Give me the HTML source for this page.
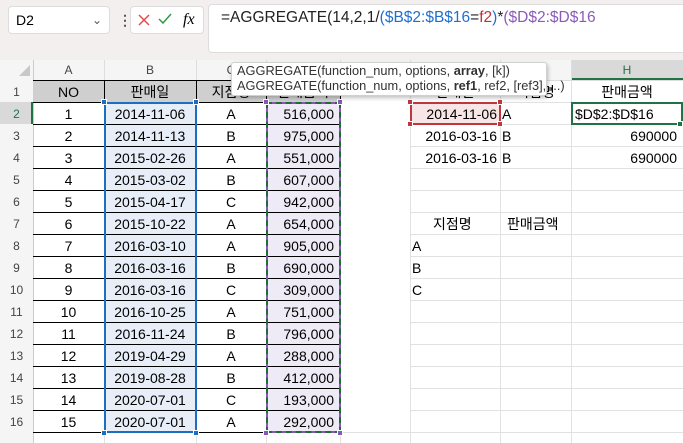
<!DOCTYPE html>
<html><head><meta charset="utf-8"><style>
*{margin:0;padding:0;box-sizing:border-box}
body{width:683px;height:443px;overflow:hidden;background:#fff;position:relative;font-family:"Liberation Sans","Noto Sans CJK KR",sans-serif;color:#000}
div{position:absolute}
.h{height:1px}
.v{width:1px}
.t{font-size:14px;height:22px;line-height:22px;white-space:nowrap}
.c{text-align:center}
.r{text-align:right}
.rh{left:0;width:33px;text-align:center;font-size:12px;color:#444;height:22px;line-height:22px}
.ch{top:60px;height:20px;line-height:20px;text-align:center;font-size:12px;color:#444}
.sq{width:6px;height:6px}
</style></head><body>
<div style="left:0;top:0;width:683px;height:60px;background:#f3efef"></div>
<div style="left:8px;top:6px;width:102px;height:28px;background:#fff;border:1px solid #ddd;border-radius:4px"></div>
<div style="left:16px;top:6px;height:28px;line-height:28px;font-size:14px">D2</div>
<div style="left:92px;top:8px;font-size:12px;color:#555;line-height:24px">&#8964;</div>
<div style="left:118px;top:8px;font-size:14px;color:#555;line-height:24px;font-weight:bold">&#8942;</div>
<div style="left:130px;top:6px;width:74px;height:28px;background:#fff;border:1px solid #ddd;border-radius:4px"></div>
<svg style="position:absolute;left:137px;top:13px" width="14" height="14"><path d="M2 2L12 12M12 2L2 12" stroke="#e04a4a" stroke-width="1.5"/></svg>
<svg style="position:absolute;left:157px;top:12px" width="16" height="14"><path d="M2 7L6 11L14 2" stroke="#2e9a4a" stroke-width="1.5" fill="none"/></svg>
<div style="left:183px;top:6px;height:28px;line-height:28px;font-family:'Liberation Serif',serif;font-style:italic;font-size:16px">fx</div>
<div style="left:208px;top:4px;width:480px;height:49px;background:#fff;border:1px solid #ddd;border-radius:4px"></div>
<div style="left:221px;top:7px;font-size:15.5px;line-height:22px;white-space:nowrap;color:#222">=AGGREGATE(14,2,1/<span style="color:#1f6fd0">(</span><span style="color:#1f6fd0">$B$2:$B$16</span>=<span style="color:#c0303a">f2</span><span style="color:#1f6fd0">)</span>*<span style="color:#8c5bb8">($D$2:$D$16</span></div>

<div style="left:0;top:60px;width:683px;height:20px;background:#f5f5f5"></div>
<div style="left:571px;top:60px;width:112px;height:20px;background:#d9d9d9"></div>
<div style="left:571px;top:78px;width:112px;height:2px;background:#217346"></div>
<svg style="position:absolute;left:18px;top:64px" width="13" height="13"><path d="M12 1L12 12L1 12Z" fill="#c8c8c8"/></svg>
<div class="ch" style="left:33px;width:71px">A</div>
<div class="ch" style="left:104px;width:92px">B</div>
<div class="ch" style="left:196px;width:70px">C</div>
<div class="ch" style="left:571px;width:112px;color:#217346">H</div>
<div class="v" style="left:104px;top:60px;height:20px;background:#ddd"></div>
<div class="v" style="left:196px;top:60px;height:20px;background:#ddd"></div>
<div class="v" style="left:266px;top:60px;height:20px;background:#ddd"></div>
<div class="v" style="left:340px;top:60px;height:20px;background:#ddd"></div>
<div class="v" style="left:410px;top:60px;height:20px;background:#ddd"></div>
<div class="v" style="left:500px;top:60px;height:20px;background:#ddd"></div>
<div class="v" style="left:571px;top:60px;height:20px;background:#ddd"></div>
<div class="h" style="left:0;top:80px;width:683px;background:#ddd"></div>

<div style="left:0;top:80px;width:33px;height:363px;background:#f5f5f5"></div>
<div style="left:0;top:102px;width:33px;height:22px;background:#d9d9d9"></div>
<div style="left:31px;top:102px;width:2px;height:22px;background:#217346"></div>
<div class="v" style="left:33px;top:60px;height:383px;background:#ccc"></div>

<div style="left:33px;top:80px;width:307px;height:22px;background:#cfcfcf"></div>
<div style="left:104px;top:102px;width:92px;height:330px;background:#e7eef8"></div>
<div style="left:266px;top:102px;width:74px;height:330px;background:#efebf6"></div>
<div style="left:410px;top:102px;width:90px;height:22px;background:#f8e6e6"></div>

<div class="v" style="left:410px;top:80px;height:363px;background:#e1e1e1"></div>
<div class="v" style="left:500px;top:80px;height:363px;background:#e1e1e1"></div>
<div class="v" style="left:571px;top:80px;height:363px;background:#e1e1e1"></div>
<div class="h" style="left:410px;top:102px;width:273px;background:#e1e1e1"></div>
<div class="h" style="left:410px;top:124px;width:273px;background:#e1e1e1"></div>
<div class="h" style="left:410px;top:146px;width:273px;background:#e1e1e1"></div>
<div class="h" style="left:410px;top:168px;width:273px;background:#e1e1e1"></div>
<div class="h" style="left:410px;top:190px;width:273px;background:#e1e1e1"></div>
<div class="h" style="left:410px;top:212px;width:273px;background:#e1e1e1"></div>
<div class="h" style="left:410px;top:234px;width:273px;background:#e1e1e1"></div>
<div class="h" style="left:410px;top:256px;width:273px;background:#e1e1e1"></div>
<div class="h" style="left:410px;top:278px;width:273px;background:#e1e1e1"></div>
<div class="h" style="left:410px;top:300px;width:273px;background:#e1e1e1"></div>
<div class="h" style="left:410px;top:322px;width:273px;background:#e1e1e1"></div>
<div class="h" style="left:410px;top:344px;width:273px;background:#e1e1e1"></div>
<div class="h" style="left:410px;top:366px;width:273px;background:#e1e1e1"></div>
<div class="h" style="left:410px;top:388px;width:273px;background:#e1e1e1"></div>
<div class="h" style="left:410px;top:410px;width:273px;background:#e1e1e1"></div>
<div class="h" style="left:410px;top:432px;width:273px;background:#e1e1e1"></div>
<div class="h" style="left:33px;top:432px;width:377px;background:#e1e1e1"></div>
<div class="v" style="left:104px;top:432px;height:11px;background:#e1e1e1"></div>
<div class="v" style="left:196px;top:432px;height:11px;background:#e1e1e1"></div>
<div class="v" style="left:266px;top:432px;height:11px;background:#e1e1e1"></div>
<div class="v" style="left:340px;top:432px;height:11px;background:#e1e1e1"></div>

<div class="h" style="left:33px;top:80px;width:307px;background:#000"></div>
<div class="h" style="left:33px;top:102px;width:307px;background:#000"></div>
<div class="h" style="left:33px;top:124px;width:307px;background:#000"></div>
<div class="h" style="left:33px;top:146px;width:307px;background:#000"></div>
<div class="h" style="left:33px;top:168px;width:307px;background:#000"></div>
<div class="h" style="left:33px;top:190px;width:307px;background:#000"></div>
<div class="h" style="left:33px;top:212px;width:307px;background:#000"></div>
<div class="h" style="left:33px;top:234px;width:307px;background:#000"></div>
<div class="h" style="left:33px;top:256px;width:307px;background:#000"></div>
<div class="h" style="left:33px;top:278px;width:307px;background:#000"></div>
<div class="h" style="left:33px;top:300px;width:307px;background:#000"></div>
<div class="h" style="left:33px;top:322px;width:307px;background:#000"></div>
<div class="h" style="left:33px;top:344px;width:307px;background:#000"></div>
<div class="h" style="left:33px;top:366px;width:307px;background:#000"></div>
<div class="h" style="left:33px;top:388px;width:307px;background:#000"></div>
<div class="h" style="left:33px;top:410px;width:307px;background:#000"></div>
<div class="h" style="left:33px;top:432px;width:307px;background:#000"></div>
<div class="v" style="left:104px;top:80px;height:352px;background:#000"></div>
<div class="v" style="left:196px;top:80px;height:352px;background:#000"></div>
<div class="v" style="left:266px;top:80px;height:352px;background:#000"></div>
<div class="v" style="left:340px;top:80px;height:352px;background:#000"></div>

<div style="left:104px;top:102px;width:93px;height:331px;border:2px solid #1b6ec2"></div>
<div class="sq" style="left:101px;top:99px;background:#1b6ec2;border:1px solid #fff"></div>
<div class="sq" style="left:193px;top:99px;background:#1b6ec2;border:1px solid #fff"></div>
<div class="sq" style="left:101px;top:430px;background:#1b6ec2;border:1px solid #fff"></div>
<div class="sq" style="left:193px;top:430px;background:#1b6ec2;border:1px solid #fff"></div>
<div style="left:266px;top:102px;width:75px;height:331px;border:2px solid #8858b8"></div>
<div style="left:266px;top:102px;width:75px;height:331px;border:2px dashed #1f6b3a"></div>
<div class="sq" style="left:263px;top:99px;background:#8858b8;border:1px solid #fff"></div>
<div class="sq" style="left:337px;top:99px;background:#8858b8;border:1px solid #fff"></div>
<div class="sq" style="left:263px;top:430px;background:#8858b8;border:1px solid #fff"></div>
<div class="sq" style="left:337px;top:430px;background:#8858b8;border:1px solid #fff"></div>
<div style="left:410px;top:102px;width:91px;height:23px;border:2px solid #c0363e"></div>
<div class="sq" style="left:407px;top:99px;background:#c0363e;border:1px solid #fff"></div>
<div class="sq" style="left:497px;top:99px;background:#c0363e;border:1px solid #fff"></div>
<div class="sq" style="left:407px;top:121px;background:#c0363e;border:1px solid #fff"></div>
<div class="sq" style="left:497px;top:121px;background:#c0363e;border:1px solid #fff"></div>
<div style="left:571px;top:102px;width:112px;height:23px;border:2px solid #217346"></div>
<div class="sq" style="left:677px;top:121px;background:#217346;border:1px solid #fff"></div>

<div class="rh" style="top:81px">1</div>
<div class="rh" style="top:103px;color:#217346">2</div>
<div class="rh" style="top:125px">3</div>
<div class="rh" style="top:147px">4</div>
<div class="rh" style="top:169px">5</div>
<div class="rh" style="top:191px">6</div>
<div class="rh" style="top:213px">7</div>
<div class="rh" style="top:235px">8</div>
<div class="rh" style="top:257px">9</div>
<div class="rh" style="top:279px">10</div>
<div class="rh" style="top:301px">11</div>
<div class="rh" style="top:323px">12</div>
<div class="rh" style="top:345px">13</div>
<div class="rh" style="top:367px">14</div>
<div class="rh" style="top:389px">15</div>
<div class="rh" style="top:411px">16</div>

<div class="t c" style="left:33px;top:81px;width:71px">NO</div>
<div class="t c" style="left:104px;top:81px;width:92px">판매일</div>
<div class="t c" style="left:196px;top:81px;width:70px">지점명</div>
<div class="t c" style="left:266px;top:81px;width:74px">판매금액</div>
<div class="t c" style="left:410px;top:81px;width:90px">판매일</div>
<div class="t c" style="left:500px;top:81px;width:71px">지점명</div>
<div class="t c" style="left:571px;top:81px;width:112px">판매금액</div>

<div style="left:33px;top:103px;width:307px">
<div class="t c" style="left:0;top:0;width:71px">1</div><div class="t c" style="left:71px;top:0;width:92px">2014-11-06</div><div class="t c" style="left:163px;top:0;width:70px">A</div><div class="t r" style="left:233px;top:0;width:68px">516,000</div>
<div class="t c" style="left:0;top:22px;width:71px">2</div><div class="t c" style="left:71px;top:22px;width:92px">2014-11-13</div><div class="t c" style="left:163px;top:22px;width:70px">B</div><div class="t r" style="left:233px;top:22px;width:68px">975,000</div>
<div class="t c" style="left:0;top:44px;width:71px">3</div><div class="t c" style="left:71px;top:44px;width:92px">2015-02-26</div><div class="t c" style="left:163px;top:44px;width:70px">A</div><div class="t r" style="left:233px;top:44px;width:68px">551,000</div>
<div class="t c" style="left:0;top:66px;width:71px">4</div><div class="t c" style="left:71px;top:66px;width:92px">2015-03-02</div><div class="t c" style="left:163px;top:66px;width:70px">B</div><div class="t r" style="left:233px;top:66px;width:68px">607,000</div>
<div class="t c" style="left:0;top:88px;width:71px">5</div><div class="t c" style="left:71px;top:88px;width:92px">2015-04-17</div><div class="t c" style="left:163px;top:88px;width:70px">C</div><div class="t r" style="left:233px;top:88px;width:68px">942,000</div>
<div class="t c" style="left:0;top:110px;width:71px">6</div><div class="t c" style="left:71px;top:110px;width:92px">2015-10-22</div><div class="t c" style="left:163px;top:110px;width:70px">A</div><div class="t r" style="left:233px;top:110px;width:68px">654,000</div>
<div class="t c" style="left:0;top:132px;width:71px">7</div><div class="t c" style="left:71px;top:132px;width:92px">2016-03-10</div><div class="t c" style="left:163px;top:132px;width:70px">A</div><div class="t r" style="left:233px;top:132px;width:68px">905,000</div>
<div class="t c" style="left:0;top:154px;width:71px">8</div><div class="t c" style="left:71px;top:154px;width:92px">2016-03-16</div><div class="t c" style="left:163px;top:154px;width:70px">B</div><div class="t r" style="left:233px;top:154px;width:68px">690,000</div>
<div class="t c" style="left:0;top:176px;width:71px">9</div><div class="t c" style="left:71px;top:176px;width:92px">2016-03-16</div><div class="t c" style="left:163px;top:176px;width:70px">C</div><div class="t r" style="left:233px;top:176px;width:68px">309,000</div>
<div class="t c" style="left:0;top:198px;width:71px">10</div><div class="t c" style="left:71px;top:198px;width:92px">2016-10-25</div><div class="t c" style="left:163px;top:198px;width:70px">A</div><div class="t r" style="left:233px;top:198px;width:68px">751,000</div>
<div class="t c" style="left:0;top:220px;width:71px">11</div><div class="t c" style="left:71px;top:220px;width:92px">2016-11-24</div><div class="t c" style="left:163px;top:220px;width:70px">B</div><div class="t r" style="left:233px;top:220px;width:68px">796,000</div>
<div class="t c" style="left:0;top:242px;width:71px">12</div><div class="t c" style="left:71px;top:242px;width:92px">2019-04-29</div><div class="t c" style="left:163px;top:242px;width:70px">A</div><div class="t r" style="left:233px;top:242px;width:68px">288,000</div>
<div class="t c" style="left:0;top:264px;width:71px">13</div><div class="t c" style="left:71px;top:264px;width:92px">2019-08-28</div><div class="t c" style="left:163px;top:264px;width:70px">B</div><div class="t r" style="left:233px;top:264px;width:68px">412,000</div>
<div class="t c" style="left:0;top:286px;width:71px">14</div><div class="t c" style="left:71px;top:286px;width:92px">2020-07-01</div><div class="t c" style="left:163px;top:286px;width:70px">C</div><div class="t r" style="left:233px;top:286px;width:68px">193,000</div>
<div class="t c" style="left:0;top:308px;width:71px">15</div><div class="t c" style="left:71px;top:308px;width:92px">2020-07-01</div><div class="t c" style="left:163px;top:308px;width:70px">A</div><div class="t r" style="left:233px;top:308px;width:68px">292,000</div>
</div>

<div class="t r" style="left:410px;top:103px;width:87px">2014-11-06</div>
<div class="t r" style="left:410px;top:125px;width:87px">2016-03-16</div>
<div class="t r" style="left:410px;top:147px;width:87px">2016-03-16</div>
<div class="t" style="left:502px;top:103px">A</div>
<div class="t" style="left:502px;top:125px">B</div>
<div class="t" style="left:502px;top:147px">B</div>
<div class="t" style="left:575px;top:103px">$D$2:$D$16</div>
<div class="t r" style="left:571px;top:125px;width:106px">690000</div>
<div class="t r" style="left:571px;top:147px;width:106px">690000</div>
<div class="t" style="left:433px;top:213px">지점명</div>
<div class="t" style="left:507px;top:213px">판매금액</div>
<div class="t" style="left:412px;top:235px">A</div>
<div class="t" style="left:412px;top:257px">B</div>
<div class="t" style="left:412px;top:279px">C</div>

<div style="left:231px;top:62px;width:316px;height:34px;background:#fff;border:1px solid #d0d0d0;border-radius:3px;box-shadow:1px 2px 4px rgba(0,0,0,.25)"></div>
<div style="left:237px;top:63px;font-size:12.8px;line-height:15px;color:#333;white-space:nowrap">AGGREGATE(function_num, options, <b>array</b>, [k])<br>AGGREGATE(function_num, options, <b>ref1</b>, ref2, [ref3], ...)</div>
</body></html>
